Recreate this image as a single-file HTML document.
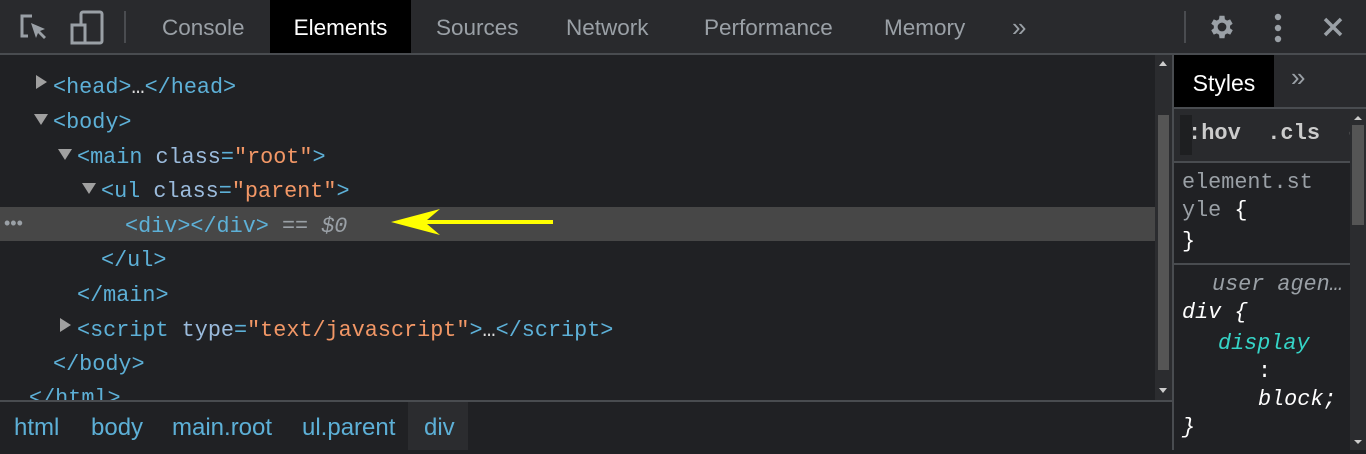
<!DOCTYPE html>
<html><head><style>
body{margin:0;width:1366px;height:450px;background:#202124;overflow:hidden;position:relative;font-family:"Liberation Sans",sans-serif}
.a{position:absolute}
.tb{left:0;top:0;width:1366px;height:53px;background:#292a2d;border-bottom:2px solid #494c50}
.tab{position:absolute;top:0;height:53px;line-height:56px;font-size:22.5px;color:#9aa0a6}
.code{font-family:"Liberation Mono",monospace;font-size:21.8px;white-space:pre;height:34px;line-height:34px;position:absolute;color:#5db0d7}
.an{color:#9bbbdc}.av{color:#f29766}
.tri{position:absolute;width:0;height:0}
.r{border-top:7px solid transparent;border-bottom:7px solid transparent;border-left:11px solid #a0a0a0}
.d{border-left:7px solid transparent;border-right:7px solid transparent;border-top:11px solid #a0a0a0}
.bc{position:absolute;top:402px;height:48px;line-height:52px;font-size:24px;color:#5db0d7}
</style></head><body>
<div class="a tb"></div>
<svg class="a" style="left:18px;top:12px" width="32" height="32" viewBox="0 0 32 32"><path d="M14 4H4v20h6" fill="none" stroke="#9aa0a6" stroke-width="3"/><path d="M13 11l5 15 2-5 6 6 2-2-6-6 5-2z" fill="#9aa0a6"/></svg>
<svg class="a" style="left:70px;top:10px" width="34" height="36" viewBox="0 0 34 36"><rect x="11" y="2" width="21" height="31" rx="2" fill="none" stroke="#9aa0a6" stroke-width="3"/><rect x="2" y="15" width="13" height="18" fill="#292a2d" stroke="#9aa0a6" stroke-width="3"/></svg>
<div class="a" style="left:124px;top:11px;width:2px;height:32px;background:#4a4c50"></div>
<div class="tab" style="left:162px">Console</div>
<div class="tab" style="left:270px;width:141px;background:#000;color:#fff;text-align:center">Elements</div>
<div class="tab" style="left:436px">Sources</div>
<div class="tab" style="left:566px">Network</div>
<div class="tab" style="left:704px">Performance</div>
<div class="tab" style="left:884px">Memory</div>
<div class="tab" style="left:1012px;font-size:26px;line-height:54px">»</div>
<div class="a" style="left:1184px;top:11px;width:2px;height:32px;background:#4a4c50"></div>
<svg class="a" style="left:1207px;top:12px" width="30" height="30" viewBox="0 0 24 24"><path fill="#9aa0a6" d="M19.4 13a7.5 7.5 0 000-2l2.1-1.6-2-3.5-2.5 1a7 7 0 00-1.7-1L15 3h-4l-.4 2.9a7 7 0 00-1.700 1l-2.5-1-2 3.5L6.5 11a7.5 7.5 0 000 2l-2.1 1.6 2 3.5 2.5-1a7 7 0 001.7 1L11 21h4l.4-2.9a7 7 0 001.7-1l2.5 1 2-3.5zM13 15.5a3.5 3.5 0 110-7 3.5 3.5 0 010 7z" transform="translate(-1 0)"/></svg>
<svg class="a" style="left:1270px;top:13px" width="16" height="30"><circle cx="8" cy="4" r="3.2" fill="#9aa0a6"/><circle cx="8" cy="15" r="3.2" fill="#9aa0a6"/><circle cx="8" cy="26" r="3.2" fill="#9aa0a6"/></svg>
<svg class="a" style="left:1322px;top:16px" width="22" height="22"><path d="M3 3l16 16M19 3L3 19" stroke="#9aa0a6" stroke-width="3.5"/></svg>

<div class="a" style="left:0;top:55px;width:1155px;height:8px;overflow:hidden"><div class="code" style="top:-26px;left:29px">&lt;html&gt;</div></div>
<div class="tri r" style="left:36px;top:75px"></div>
<div class="code" style="top:71px;left:53px">&lt;head&gt;<span style="color:#ddd">…</span>&lt;/head&gt;</div>
<div class="tri d" style="left:34px;top:114px"></div>
<div class="code" style="top:106px;left:53px">&lt;body&gt;</div>
<div class="tri d" style="left:58px;top:149px"></div>
<div class="code" style="top:141px;left:77px">&lt;main <span class="an">class</span>=<span class="av">"root"</span>&gt;</div>
<div class="tri d" style="left:82px;top:183px"></div>
<div class="code" style="top:175px;left:101px">&lt;ul <span class="an">class</span>=<span class="av">"parent"</span>&gt;</div>
<div class="a" style="left:0;top:207px;width:1155px;height:34px;background:#474747"></div>
<div class="a" style="left:4px;top:213px;color:#9aa0a6;font-size:18px">•••</div>
<div class="code" style="top:210px;left:125px">&lt;div&gt;&lt;/div&gt; <span style="color:#9aa0a6">== <i>$0</i></span></div>
<svg class="a" style="left:385px;top:206px" width="172" height="32"><path d="M6 16 L55 3 L42 14 L168 14 L168 18 L42 18 L55 29 Z" fill="#ffff00"/></svg>
<div class="code" style="top:244px;left:101px">&lt;/ul&gt;</div>
<div class="code" style="top:279px;left:77px">&lt;/main&gt;</div>
<div class="tri r" style="left:60px;top:318px"></div>
<div class="code" style="top:314px;left:77px">&lt;script <span class="an">type</span>=<span class="av">"text/javascript"</span>&gt;<span style="color:#ddd">…</span>&lt;/script&gt;</div>
<div class="code" style="top:348px;left:53px">&lt;/body&gt;</div>
<div class="a" style="left:0;top:380px;width:1155px;height:20px;overflow:hidden"><div class="code" style="top:2px;left:29px">&lt;/html&gt;</div></div>

<div class="a" style="left:1155px;top:55px;width:17px;height:345px;background:#2b2c2f"></div>
<div class="a" style="left:1158px;top:115px;width:11px;height:255px;background:#555"></div>
<div class="a" style="left:1159px;top:61px;border-left:4px solid transparent;border-right:4px solid transparent;border-bottom:5px solid #ccc"></div>
<div class="a" style="left:1159px;top:388px;border-left:4px solid transparent;border-right:4px solid transparent;border-top:5px solid #ccc"></div>
<div class="a" style="left:1172px;top:53px;width:2px;height:397px;background:#494c50"></div>

<div class="a" style="left:0;top:400px;width:1172px;height:2px;background:#494c50"></div>
<div class="bc" style="left:14px">html</div>
<div class="bc" style="left:91px">body</div>
<div class="bc" style="left:172px">main.root</div>
<div class="bc" style="left:302px">ul.parent</div>
<div class="a" style="left:408px;top:402px;width:60px;height:48px;background:#2b2c2f"></div>
<div class="bc" style="left:424px">div</div>

<div class="a" style="left:1174px;top:55px;width:192px;height:52px;background:#292a2d"></div>
<div class="a" style="left:1174px;top:55px;width:100px;height:52px;background:#000;color:#fff;font-size:23px;line-height:56px;text-align:center">Styles</div>
<div class="a" style="left:1291px;top:62px;font-size:26px;color:#9aa0a6">»</div>
<div class="a" style="left:1174px;top:107px;width:192px;height:2px;background:#494c50"></div>
<div class="a" style="left:1174px;top:109px;width:176px;height:52px;background:#292a2d"></div>
<div class="a" style="left:1180px;top:115px;width:12px;height:40px;background:#1e1f21"></div>
<div class="a" style="left:1188px;top:121px;font-family:'Liberation Mono',monospace;font-weight:bold;font-size:22px;color:#ccc;white-space:pre">:hov  .cls  -</div>
<div class="a" style="left:1174px;top:161px;width:176px;height:2px;background:#494c50"></div>
<div class="code" style="left:1182px;top:166px;color:#9aa0a6">element.st</div>
<div class="code" style="left:1182px;top:194px;color:#9aa0a6">yle <span style="color:#fff">{</span></div>
<div class="code" style="left:1182px;top:225px;color:#fff">}</div>
<div class="a" style="left:1174px;top:263px;width:176px;height:2px;background:#494c50"></div>
<div class="code" style="left:1212px;top:268px;color:#9aa0a6;font-style:italic">user agen…</div>
<div class="code" style="left:1182px;top:296px;color:#fff;font-style:italic">div {</div>
<div class="code" style="left:1218px;top:327px;color:#35d4c7;font-style:italic">display</div>
<div class="code" style="left:1258px;top:355px;color:#fff">:</div>
<div class="code" style="left:1258px;top:383px;color:#fff;font-style:italic">block;</div>
<div class="code" style="left:1182px;top:411px;color:#fff;font-style:italic">}</div>
<div class="a" style="left:1350px;top:109px;width:16px;height:341px;background:#2b2c2f"></div>
<div class="a" style="left:1352px;top:125px;width:12px;height:100px;background:#555"></div>
<div class="a" style="left:1354px;top:116px;border-left:4px solid transparent;border-right:4px solid transparent;border-bottom:4px solid #ccc"></div>
<div class="a" style="left:1354px;top:440px;border-left:4px solid transparent;border-right:4px solid transparent;border-top:4px solid #ccc"></div>
</body></html>
